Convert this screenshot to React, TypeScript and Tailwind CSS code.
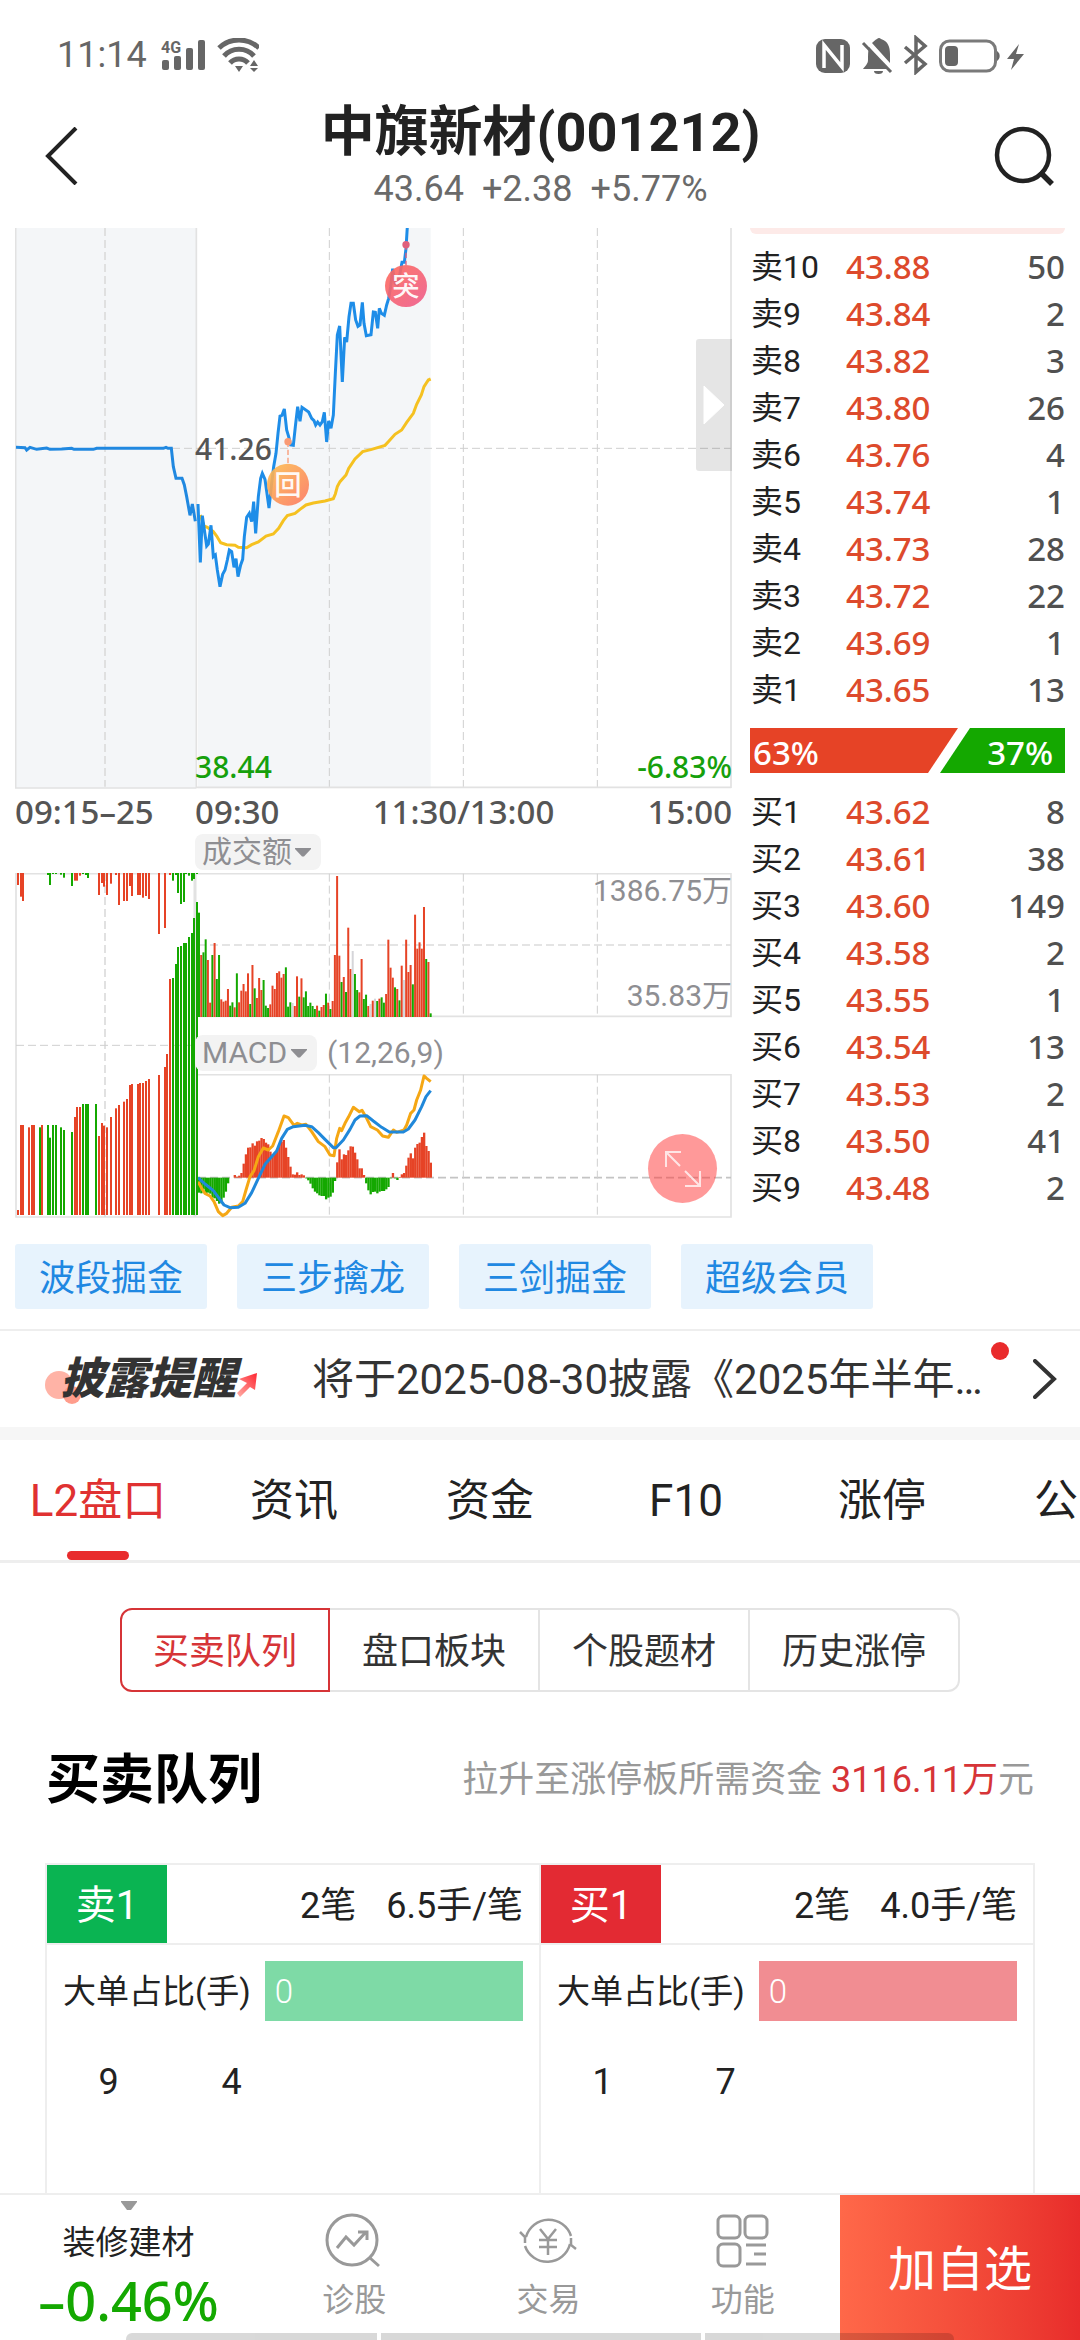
import { useState } from "react";
import type { ReactNode } from "react";
import clsx from "clsx";

type Level = [label: string, price: string, volume: number];

const RED = "#e64326";
const GREEN = "#14a800";
const GRID = "#cfcfcf";
const BORDER = "#e2e2e2";

const asks: Level[] = [
  ["卖10", "43.88", 50],
  ["卖9", "43.84", 2],
  ["卖8", "43.82", 3],
  ["卖7", "43.80", 26],
  ["卖6", "43.76", 4],
  ["卖5", "43.74", 1],
  ["卖4", "43.73", 28],
  ["卖3", "43.72", 22],
  ["卖2", "43.69", 1],
  ["卖1", "43.65", 13],
];

const bids: Level[] = [
  ["买1", "43.62", 8],
  ["买2", "43.61", 38],
  ["买3", "43.60", 149],
  ["买4", "43.58", 2],
  ["买5", "43.55", 1],
  ["买6", "43.54", 13],
  ["买7", "43.53", 2],
  ["买8", "43.50", 41],
  ["买9", "43.48", 2],
];

const chips = ["波段掘金", "三步擒龙", "三剑掘金", "超级会员"];
const tabs = ["L2盘口", "资讯", "资金", "F10", "涨停", "公告"];
const segments = ["买卖队列", "盘口板块", "个股题材", "历史涨停"];

// Charts are drawn on a canvas three times as fine as the page
const auctionLine =
  "48,682 75,683 80,690 90,682 110,688 140,684 150,688 185,687 215,685 222,688 280,688 290,685 490,685 498,682 504,685 514,685 520,740 528,775 546,775 553,795 560,830 570,886 577,852 586,904";
const priceLine =
  "594,852 601,1027 607,887 620,978 625,972 633,916 640,1010 646,1005 652,1050 660,1100 668,1063 675,1050 682,1020 688,990 695,995 702,1042 708,1016 714,1070 722,1035 728,1018 733,950 740,892 748,880 755,905 761,845 767,940 775,830 782,775 787,760 795,778 807,864 815,790 821,740 828,700 834,640 840,588 846,586 853,567 860,630 866,650 872,675 880,676 886,620 893,560 900,604 906,562 926,576 935,595 942,602 947,615 953,606 960,615 967,605 973,577 980,666 986,603 993,625 1000,585 1006,460 1012,345 1019,318 1027,486 1034,352 1040,366 1047,290 1053,250 1060,250 1067,300 1074,319 1080,315 1087,247 1092,310 1099,347 1113,344 1120,276 1126,277 1133,325 1138,265 1144,280 1153,286 1160,255 1166,235 1172,200 1178,146 1185,190 1192,195 1200,160 1206,127 1213,127 1218,85 1222,20";
const averageLine =
  "601,885 612,918 622,922 640,935 650,948 662,968 680,974 705,976 715,982 740,983 755,974 775,966 798,948 820,942 836,925 850,902 862,887 885,880 900,868 918,855 940,849 975,843 1000,836 1006,822 1012,800 1020,785 1038,765 1046,745 1065,717 1088,695 1115,688 1155,676 1165,665 1185,643 1205,630 1220,607 1240,580 1250,553 1264,525 1272,500 1285,480 1292,477";
const difLine =
  "594,1265 605,1285 615,1300 630,1308 642,1325 655,1355 668,1367 680,1360 695,1342 715,1338 728,1325 738,1290 750,1250 762,1232 775,1190 790,1164 805,1170 818,1158 835,1115 852,1068 865,1073 882,1096 892,1090 905,1095 918,1093 935,1115 955,1145 975,1160 990,1185 1002,1187 1010,1135 1019,1105 1025,1112 1035,1090 1045,1072 1060,1042 1078,1055 1086,1051 1100,1075 1112,1100 1132,1110 1148,1128 1165,1132 1180,1110 1190,1117 1212,1110 1220,1095 1232,1060 1242,1050 1250,1020 1262,990 1272,948 1280,955 1292,965";
const deaLine =
  "594,1253 615,1272 640,1292 655,1312 672,1335 690,1343 715,1342 735,1330 755,1298 775,1255 795,1213 815,1190 830,1173 845,1135 862,1108 880,1100 915,1096 935,1100 955,1118 975,1138 1000,1163 1008,1163 1030,1140 1050,1108 1065,1080 1080,1068 1100,1067 1120,1083 1145,1102 1168,1116 1210,1116 1225,1107 1245,1080 1265,1040 1278,1010 1292,992";

// x:y plus the side of the bar
const matched =
  "54:1350r 63:1095r 69:1095r 87:1102r 96:1095r 102:1095r 120:1102g 126:1095r 144:1095g 150:1133g 159:1095g 168:1095g 183:1102g 192:1110g 216:1116g 225:1071r 231:1041r 240:1041r 249:1032g 258:1032g 264:1032g 288:1032g 297:1128r 306:1089r 312:1097r 321:1102r 333:1071r 348:1045r 357:1035r 372:1025r 381:1017r 390:975r 396:972r 414:972r 420:969r 429:969r 438:963r 447:957r 477:945r 495:921r 501:882r 510:657r 519:654g 528:612g 534:561g 543:558g 552:549g 558:549g 567:531g 576:519g 582:474g 591:426g";
const unmatched =
  "54:375r 63:410r 69:423r 144:345g 150:375g 159:342g 168:342g 183:344g 192:353g 216:378g 225:362r 231:362r 240:347r 249:342g 258:345g 264:354g 297:405r 306:369r 312:380r 321:405r 333:371r 348:345r 357:435r 372:423r 381:423r 390:378r 396:408r 414:405r 420:405r 429:413r 438:408r 447:417r 477:522r 495:504r 510:345r 519:362g 528:345g 534:399g 543:432g 552:426g 558:342g 567:347g 576:362g 582:357g 591:342g";
const turnover =
  "458g 585r 577g 538g 600r 728r 585g 549r 657g 585g 718r 725r 722r 687r 737g 727g 742r 640g 727r 692r 672r 694r 640r 732g 615r 685g 714r 654r 690r 660g 737g 744g 733r 677r 687r 639r 634r 653r 642r 622g 740g 727g 729n 738r 649r 710g 655r 712g 694g 738g 728g 738g 747g 737r 752g 741r 735r 701g 728r 747g 723r 585r 348r 587r 666g 651r 696g 503r 627r 573n 642g 690g 697r 597r 717g 704g 738r 732n 722r 716n 723g 716r 712g 728g 702r 539r 623r 653r 682g 687r 721g 617r 660n 539r 636r 615r 673g 464r 566r 547r 566r 441r 597g 606r 760g";
const macd = [
  -45, -47, -35, -50, -45, -48, -60, -62, -70, -78, -75, -60, -42, -17, 0, 0, 8, 3, 6, 14, 42, 70, 90, 91, 103, 96, 109,
  111, 119, 116, 105, 100, 78, 70, 75, 85, 100, 108, 113, 90, 62, 33, 10, 9, 16, 8, 10, 7, -2, -8, -18, -32, -42, -47,
  -53, -55, -55, -65, -60, -57, -45, -10, 46, 85, 55, 70, 68, 82, 94, 93, 75, 55, 28, 28, 8, -17, -38, -50, -43, -42,
  -47, -42, -40, -40, -35, -28, -2, 14, -2, -7, 2, 10, 14, 36, 60, 73, 58, 90, 101, 105, 122, 135, 95, 80, 45,
];

const tone = (key: string) => (key === "r" ? RED : key === "g" ? GREEN : "#d5d5d9");

function parseBars(source: string) {
  return source.split(" ").map((item) => {
    const [x, rest] = item.split(":");
    return { x: Number(x), y: parseInt(rest, 10), color: tone(rest.slice(-1)) };
  });
}

function VerticalGrid({ top, bottom }: { top: number; bottom: number }) {
  return (
    <>
      {[988, 1390, 1792].map((x) => (
        <line key={x} x1={x} x2={x} y1={top} y2={bottom} stroke={GRID} strokeWidth={3} strokeDasharray="24 12" />
      ))}
    </>
  );
}

function Marker({ cx, cy, char, dotY, fill, dot }: { cx: number; cy: number; char: string; dotY: number; fill: string; dot: string }) {
  return (
    <g>
      <line x1={cx} x2={cx} y1={dotY} y2={cy - 63} stroke={dot} strokeWidth={4} strokeDasharray="16 8" />
      <circle cx={cx} cy={dotY} r={11} fill={dot} />
      <circle cx={cx} cy={cy} r={63} fill={fill} fillOpacity={0.9} />
      <text x={cx} y={cy + 30} textAnchor="middle" fontSize={82} fontWeight={500} fill="#fff" fillOpacity={0.95}>
        {char}
      </text>
    </g>
  );
}

function PriceChart() {
  return (
    <div className="relative font-['Noto_Sans',sans-serif] text-[30px] leading-[36px] font-medium">
      <svg viewBox="45 24 2151 1683" className="block w-full font-['Noto_Sans_CJK_SC',sans-serif]" aria-label="分时走势">
        <defs>
          <linearGradient id="breakout" x1="0" y1="0" x2="1" y2="1">
            <stop offset="0" stopColor="#ff6a58" />
            <stop offset="1" stopColor="#ee5a8c" />
          </linearGradient>
          <linearGradient id="pullback" x1="0" y1="0" x2="1" y2="1">
            <stop offset="0" stopColor="#fdc04e" />
            <stop offset="1" stopColor="#fd7560" />
          </linearGradient>
        </defs>
        <rect x={45} y={24} width={544} height={1681} fill="#f4f6f8" />
        <polygon points={`${priceLine} 1292,20 1292,1705 594,1705`} fill="#f4f6f8" />
        <path d="M47 24V1704H589M589 24V1704M589 1702H2194M2193 24V1704" fill="none" stroke={BORDER} strokeWidth={5} />
        <line x1={315} x2={315} y1={24} y2={1700} stroke="#dcdcdc" strokeWidth={5} strokeDasharray="24 12" />
        <VerticalGrid top={24} bottom={1700} />
        <line x1={516} x2={2193} y1={685} y2={685} stroke={GRID} strokeWidth={3} strokeDasharray="24 12" />
        <polyline points={averageLine} fill="none" stroke="#f5c120" strokeWidth={9} />
        <polyline points={auctionLine} fill="none" stroke="#2088e0" strokeWidth={9} />
        <polyline points={priceLine} fill="none" stroke="#1e8de8" strokeWidth={9} />
        <Marker cx={1218} cy={198} char="突" dotY={74} fill="url(#breakout)" dot="#e0607c" />
        <Marker cx={864} cy={794} char="回" dotY={665} fill="url(#pullback)" dot="#f99a74" />
      </svg>
      <span className="absolute left-[180px] top-[203px] text-[#555]">41.26</span>
      <span className="absolute left-[180px] bottom-1 text-[#16a00c]">38.44</span>
      <span className="absolute right-0 bottom-1 text-[#16a00c]">-6.83%</span>
      <button
        type="button"
        aria-label="收起盘口"
        className="absolute right-0 top-[111px] flex h-[132px] w-9 items-center justify-center rounded-l-[3px] bg-black/10"
      >
        <svg viewBox="0 0 22 40" className="w-[22px]">
          <path d="M1 1v38L21 20z" fill="#fff" stroke="#fff" strokeLinejoin="round" />
        </svg>
      </button>
    </div>
  );
}

function AuctionChart() {
  return (
    <svg viewBox="45 339 549 1035" className="block w-full" aria-label="集合竞价">
      <path d="M48 339V1371H594M45 341H594" fill="none" stroke={BORDER} strokeWidth={5} />
      <line x1={585} x2={585} y1={339} y2={1371} stroke={BORDER} strokeWidth={9} />
      <line x1={315} x2={315} y1={339} y2={1371} stroke="#dcdcdc" strokeWidth={5} strokeDasharray="24 12" />
      <line x1={48} x2={585} y1={856} y2={856} stroke={GRID} strokeWidth={3} strokeDasharray="24 12" />
      {parseBars(unmatched).map((bar) => (
        <rect key={bar.x} x={bar.x - 3} y={339} width={6} height={bar.y - 339} fill={bar.color} />
      ))}
      {parseBars(matched).map((bar) => (
        <rect key={bar.x} x={bar.x - 3} y={bar.y} width={6} height={1365 - bar.y} fill={bar.color} />
      ))}
    </svg>
  );
}

function TurnoverChart() {
  const bars = turnover.split(" ");
  const step = 695 / (bars.length - 1);
  return (
    <div className="relative text-[30px] leading-[36px] text-[#8e8e92]">
      <svg viewBox="594 339 1602 435" className="block w-full" aria-label="成交额">
        <path d="M594 341H2193V769H594" fill="none" stroke={BORDER} strokeWidth={5} />
        <line x1={594} x2={2193} y1={555} y2={555} stroke="#dcdcdc" strokeWidth={4} strokeDasharray="24 12" />
        <VerticalGrid top={341} bottom={769} />
        {bars.map((bar, i) => (
          <rect key={i} x={594 + i * step} y={parseInt(bar, 10)} width={6} height={771 - parseInt(bar, 10)} fill={tone(bar.slice(-1))} />
        ))}
      </svg>
      <span className="absolute right-0 top-0">1386.75万</span>
      <span className="absolute right-0 bottom-1">35.83万</span>
    </div>
  );
}

function MacdChart() {
  const step = 695 / (macd.length - 1);
  return (
    <div className="relative">
      <svg viewBox="594 942 1602 432" className="block w-full" aria-label="MACD">
        <path d="M594 944H2193V1371H594" fill="none" stroke={BORDER} strokeWidth={5} />
        <line x1={594} x2={2193} y1={1253} y2={1253} stroke="#c4c4c4" strokeWidth={5} strokeDasharray="24 12" />
        <VerticalGrid top={944} bottom={1371} />
        {macd.map((value, i) => (
          <rect
            key={i}
            x={594 + i * step}
            y={value > 0 ? 1253 - value : 1253}
            width={7}
            height={Math.abs(value)}
            fill={value > 0 ? RED : GREEN}
          />
        ))}
        <polyline points={difLine} fill="none" stroke="#f5a714" strokeWidth={9} strokeLinejoin="round" />
        <polyline points={deaLine} fill="none" stroke="#2088da" strokeWidth={9} strokeLinejoin="round" />
      </svg>
      <button
        type="button"
        aria-label="全屏"
        className="absolute right-[15px] bottom-[15px] flex size-[69px] items-center justify-center rounded-full bg-[#ff3333]/50"
      >
        <svg viewBox="0 0 36 36" className="size-9" fill="none" stroke="#fff" strokeOpacity={0.75} strokeWidth={2}>
          <path d="M1 16V1h15M1 1l14 14M20 20l15 15M35 20v15H20" />
        </svg>
      </button>
    </div>
  );
}

function IndicatorSelect({ label, options, className }: { label: string; options: string[]; className: string }) {
  return (
    <div className={clsx("relative h-9 rounded-lg bg-[#f3f3f3]", className)}>
      <select
        aria-label={label}
        className="block h-9 w-full appearance-none bg-transparent pl-[7px] text-[30px] leading-9 text-[#8e8e92] outline-none"
      >
        {options.map((option) => (
          <option key={option}>{option}</option>
        ))}
      </select>
      <svg viewBox="0 0 16 9" className="pointer-events-none absolute right-2.5 top-3.5 w-4">
        <path d="M0 0h16v1L9 8.500H7L0 1z" fill="#8e8e92" />
      </svg>
    </div>
  );
}

function BookTable({ label, rows }: { label: string; rows: Level[] }) {
  return (
    <table className="w-full" aria-label={label}>
      <tbody>
        {rows.map(([name, price, volume]) => (
          <tr key={name} className="h-[47px] leading-[46px]">
            <th scope="row" className="w-24 p-0 pl-px text-left text-[32px] font-normal text-[#222]">
              {name}
            </th>
            <td className="p-0 font-['Noto_Sans',sans-serif] text-[33px] font-medium text-[#dd4a2c]">{price}</td>
            <td className="p-0 text-right font-['Noto_Sans',sans-serif] text-[33px] font-medium text-[#505050]">{volume}</td>
          </tr>
        ))}
      </tbody>
    </table>
  );
}

function OrderBook() {
  return (
    <aside className="w-[315px] shrink-0">
      <div className="mb-[9px] h-1.5 rounded-b-xl bg-[#fdeae8]" />
      <BookTable label="卖盘" rows={asks} />
      <div className="my-[15px] flex h-[45px] font-['Noto_Sans',sans-serif] text-[33px] leading-[50px] font-medium text-white">
        <div className="flex-1 bg-[#e64326] pl-[3px] [clip-path:polygon(0_0,100%_0,calc(100%-30px)_100%,0_100%)]">63%</div>
        <div className="-ml-[18px] w-[125px] bg-[#14a800] pr-3 text-right [clip-path:polygon(30px_0,100%_0,100%_100%,0_100%)]">
          37%
        </div>
      </div>
      <BookTable label="买盘" rows={bids} />
    </aside>
  );
}

function StatusBar() {
  return (
    <div className="flex h-24 items-center justify-between pt-[14px] pr-[53px] pl-[57px] text-[#666]">
      <div className="flex items-center gap-3.5">
        <span className="text-[36px] leading-10">11:14</span>
        <svg viewBox="0 0 98 34" className="w-[98px]" fill="#666">
          <text x="0" y="15" fontSize="16" fontWeight="700">
            4G
          </text>
          <rect x="1" y="22" width="7" height="10" rx="2" />
          <rect x="13" y="18" width="7" height="14" rx="2" />
          <rect x="25" y="10" width="7" height="22" rx="2" />
          <rect x="37" y="2" width="7" height="30" rx="2" />
          <g fill="none" stroke="#666" strokeWidth="5">
            <path d="M58 10a29 29 0 0 1 40 0" />
            <path d="M63 18a20 20 0 0 1 30 0" />
            <path d="M69 25a12 12 0 0 1 18 0" />
          </g>
          <path d="M74 28h8l-4 6zM89 28l4-6 4 6zM89 30h8l-4 4z" />
        </svg>
      </div>
      <svg viewBox="0 0 214 40" className="w-[214px]" fill="#666">
        <rect x="3" y="4" width="34" height="34" rx="9" />
        <path d="M11 33V10l18 22V10" fill="none" stroke="#fff" strokeWidth="3.500" />
        <path d="M56 12l19 22H50c2-3 5-5 5-9 0-5 0-9 1-13zM59 8c2-2 3-3 5-4a3 3 0 0 1 4 0c7 2 9 8 9 15v9zM61 36h9a4.500 3 0 0 1-9 0z" />
        <path d="M50 8l28 29" stroke="#666" strokeWidth="3" />
        <path d="M92 12l20 17-9 8V3l9 8-20 17" fill="none" stroke="#666" strokeWidth="3.500" />
        <rect x="127.500" y="6" width="55" height="30" rx="9" fill="none" stroke="#7a7a7a" strokeWidth="3" />
        <rect x="132" y="11" width="13" height="20" rx="4" />
        <path d="M184 16a6 6 0 0 1 0 10z" />
        <path d="M206 9l-12 15h7l-3 11 13-16h-8z" />
      </svg>
    </div>
  );
}

function Header() {
  return (
    <header className="grid grid-cols-[1fr_auto_1fr] items-center pt-[5px] pr-[26px] pb-[17px] pl-[27px]">
      <button type="button" aria-label="返回" className="justify-self-start pl-[18px]">
        <svg viewBox="0 0 33 58" className="w-[33px]" fill="none" stroke="#222" strokeWidth="4">
          <path d="M31 1L3 29l28 28" />
        </svg>
      </button>
      <div className="text-center">
        <h1 className="text-[54px] leading-16 font-bold text-[#222]">中旗新材(001212)</h1>
        <p className="flex justify-center gap-[18px] pt-0.5 text-[36px] leading-11 text-[#6a6a6a]">
          <span>43.64</span>
          <span>+2.38</span>
          <span>+5.77%</span>
        </p>
      </div>
      <button type="button" aria-label="搜索" className="justify-self-end">
        <svg viewBox="0 0 60 60" className="w-[60px]" fill="none" stroke="#222" strokeWidth="4.500">
          <circle cx="29" cy="29" r="26" />
          <path d="M46 46l12 12" strokeWidth="5.500" />
        </svg>
      </button>
    </header>
  );
}

function QueueSide({ side, name, average, lots }: { side: "sell" | "buy"; name: string; average: string; lots: number[] }) {
  const sell = side === "sell";
  return (
    <section className="flex-1 border-r-2 border-[#eee]">
      <div className="flex h-20 items-center justify-between border-b-2 border-[#eee]">
        <h3
          className={clsx(
            "flex h-full w-[120px] items-center justify-center pt-1 text-[40px] text-white",
            sell ? "bg-[#0ab452]" : "bg-[#e32a33]",
          )}
        >
          {name}
        </h3>
        <p className="flex gap-[30px] pt-1 pr-4 text-[36px] text-[#222]">
          <span>2笔</span>
          <span>{average}</span>
        </p>
      </div>
      <div className="flex h-[92px] items-center gap-3.5 pr-4 pl-4 text-[33px] text-[#222]">
        <span className="pt-0.5">大单占比(手)</span>
        <div
          className={clsx(
            "flex h-[60px] flex-1 items-center pt-0.5 pl-2.5 text-[33px] font-light text-white",
            sell ? "bg-[#7edaa6]" : "bg-[#f18d92]",
          )}
        >
          0
        </div>
      </div>
      <ul className="grid grid-cols-4 text-center text-[36px] leading-[90px] text-[#222]">
        {lots.map((lot) => (
          <li key={lot}>{lot}</li>
        ))}
      </ul>
    </section>
  );
}

function NavItem({ label, children }: { label: string; children: ReactNode }) {
  return (
    <button type="button" className="flex flex-1 flex-col items-center gap-2.5 pt-[17px] text-[32px] leading-11 text-[#999]">
      <svg viewBox="0 0 60 56" className="w-[60px]" fill="none" stroke="#999" strokeWidth="3">
        {children}
      </svg>
      {label}
    </button>
  );
}

function BottomBar() {
  return (
    <footer className="relative flex h-[147px] shrink-0 border-t-2 border-[#eee] bg-white">
      <a href="#sector" className="flex w-[257px] flex-col items-center pt-1.5">
        <svg viewBox="0 0 16 10" className="w-4">
          <path d="M0 0h16v1L10 9H6L0 1z" fill="#999" />
        </svg>
        <span className="pt-2.5 text-[33px] leading-11 text-[#222]">装修建材</span>
        <span className="font-['Noto_Sans',sans-serif] text-[54px] leading-[70px] font-medium text-[#14a800]">–0.46%</span>
      </a>
      <NavItem label="诊股">
        <circle cx="28" cy="28" r="25" />
        <path d="M46 46l9 8M13 36l9-11 8 8 12-13M34 20h9v8" />
      </NavItem>
      <NavItem label="交易">
        <path d="M7 34a23.500 23.500 0 0 0 45-2M53 24a23.500 23.500 0 0 0-45 1M7 31v-6l-5-5M53 26v7l5 4" strokeWidth="2.500" />
        <path d="M22 17l8 10 8-10M30 27v16M21 28h18M21 35h18" strokeWidth="2.500" />
      </NavItem>
      <NavItem label="功能">
        <rect x="5" y="4" width="22" height="22" rx="5" />
        <rect x="32" y="4" width="22" height="22" rx="5" />
        <rect x="5" y="32" width="22" height="22" rx="5" />
        <path d="M33 33h20M41 42h12M33 52h20" />
      </NavItem>
      <button type="button" className="w-60 bg-linear-to-r from-[#ff6849] to-[#e82c2b] pt-1 text-[48px] text-white">
        加自选
      </button>
      <div className="absolute inset-x-[126px] bottom-0 flex h-[7px] gap-1 opacity-15">
        <span className="w-[251px] rounded-tl-md bg-black" />
        <span className="w-80 bg-black" />
        <span className="flex-1 rounded-tr-md bg-black" />
      </div>
    </footer>
  );
}

export default function App() {
  const [tab, setTab] = useState(0);
  const [segment, setSegment] = useState(0);

  return (
    <div className="flex h-screen flex-col bg-white font-['Roboto','Noto_Sans_CJK_SC',sans-serif]">
      <StatusBar />
      <Header />

      <main className="flex min-h-0 flex-1 flex-col overflow-hidden">
        <div className="flex shrink-0 gap-[18px] px-[15px]">
          <div className="min-w-0 flex-1">
            <PriceChart />
            <div className="flex font-['Noto_Sans',sans-serif] text-[33px] leading-[45px] font-medium text-[#555]">
              <span className="w-[180px]">09:15–25</span>
              <div className="flex flex-1 justify-between">
                <span className="flex-1">09:30</span>
                <span>11:30/13:00</span>
                <span className="flex-1 text-right">15:00</span>
              </div>
            </div>
            <div className="flex">
              <div className="w-[183px] shrink-0 pt-[39px]">
                <AuctionChart />
              </div>
              <div className="min-w-0 flex-1">
                <IndicatorSelect label="副图一" options={["成交额", "成交量"]} className="mb-[3px] -ml-[3px] w-[126px]" />
                <TurnoverChart />
                <div className="mt-[17px] mb-[3px] flex items-center gap-2.5">
                  <IndicatorSelect label="副图二" options={["MACD", "KDJ"]} className="-ml-[3px] w-[122px]" />
                  <span className="text-[30px] leading-9 text-[#8e8e92]">(12,26,9)</span>
                </div>
                <MacdChart />
              </div>
            </div>
          </div>
          <OrderBook />
        </div>

        <div className="flex shrink-0 gap-[30px] px-[15px] pt-[26px] pb-5">
          {chips.map((chip) => (
            <button key={chip} type="button" className="h-[65px] w-48 rounded-[3px] bg-[#e7f3fd] pt-1 text-[36px] text-[#1f88e2]">
              {chip}
            </button>
          ))}
        </div>

        <a
          href="#disclosure"
          className="flex h-[98px] shrink-0 items-center border-t-2 border-[#eee] pr-[23px] pl-[45px] text-[#333]"
        >
          <div className="relative w-[267px] shrink-0">
            <svg viewBox="0 0 212 44" className="absolute top-3 left-0 w-[212px]">
              <defs>
                <linearGradient id="arrow" x1="0" y1="1" x2="1" y2="0">
                  <stop offset="0" stopColor="#ffb0a8" />
                  <stop offset="1" stopColor="#ff2530" />
                </linearGradient>
              </defs>
              <circle cx="14" cy="22" r="14" fill="#ffb3a6" />
              <circle cx="27" cy="32" r="9" fill="#ff9d8c" />
              <path d="M192 30l10-10-8-4 18-6-2 17-5-3-10 10z" fill="url(#arrow)" />
            </svg>
            <strong className="relative pl-[15px] text-[44px] leading-[56px] font-black italic">披露提醒</strong>
          </div>
          <p className="min-w-0 flex-1 truncate text-[42px]">将于2025-08-30披露《2025年半年…</p>
          <div className="relative shrink-0 pl-2">
            <span className="absolute -top-[17px] right-12 size-[18px] rounded-full bg-[#e92b2c]" />
            <svg viewBox="0 0 24 40" className="w-6" fill="none" stroke="#333" strokeWidth="4" strokeLinecap="round">
              <path d="M2 2l19 18L2 38" />
            </svg>
          </div>
        </a>

        <nav className="flex shrink-0 overflow-hidden border-t-[13px] border-b-[3px] border-t-[#f6f6f6] border-b-[#eee]">
          {tabs.map((name, i) => (
            <button
              key={name}
              type="button"
              onClick={() => setTab(i)}
              className={clsx(
                "flex h-[120px] w-49 shrink-0 flex-col items-center justify-between text-[44px] leading-[122px]",
                i === tab ? "text-[#e03131]" : "text-[#222]",
              )}
            >
              <span className="h-[111px]">{name}</span>
              {i === tab && <span className="h-[9px] w-[62px] rounded-full bg-[#e82c2d]" />}
            </button>
          ))}
        </nav>

        <div className="mx-[120px] mt-[45px] grid h-[84px] shrink-0 grid-cols-4 text-[36px]">
          {segments.map((name, i) => (
            <button
              key={name}
              type="button"
              onClick={() => setSegment(i)}
              className={clsx(
                "border-2 pt-1 first:rounded-l-xl last:rounded-r-xl not-first:border-l-0",
                i === segment ? "border-[#d63437] text-[#d63437]" : "border-[#e4e4e4] text-[#333]",
              )}
            >
              {name}
            </button>
          ))}
        </div>

        <div className="mx-[46px] mt-[43px] mb-[38px] flex h-[90px] shrink-0 items-center justify-between">
          <h2 className="text-[54px] font-bold text-black">买卖队列</h2>
          <p className="text-[36px] text-[#999]">
            拉升至涨停板所需资金 <span className="text-[#d63437]">3116.11万</span>元
          </p>
        </div>

        <div className="mx-[45px] flex flex-1 border-t-2 border-l-2 border-[#eee]">
          <QueueSide side="sell" name="卖1" average="6.5手/笔" lots={[9, 4]} />
          <QueueSide side="buy" name="买1" average="4.0手/笔" lots={[1, 7]} />
        </div>
      </main>

      <BottomBar />
    </div>
  );
}
